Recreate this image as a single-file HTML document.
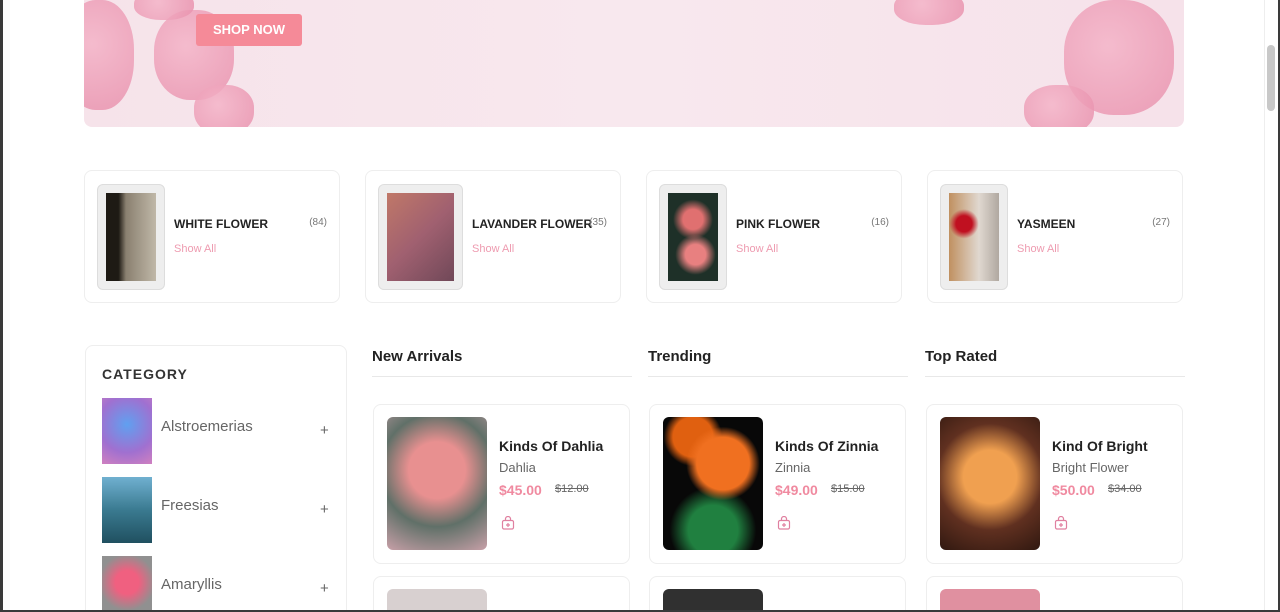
<!DOCTYPE html>
<html><head><meta charset="utf-8"><style>
*{box-sizing:border-box;margin:0;padding:0}
html{width:1280px;height:612px;overflow:hidden}
body{width:1280px;height:612px;overflow:hidden;background:#fff;font-family:"Liberation Sans",sans-serif;position:relative}
.frameL{position:absolute;left:0;top:0;width:3px;height:612px;background:#3a3a3a}
.frameR{position:absolute;right:0;top:0;width:2px;height:612px;background:#3a3a3a}
.frameB{position:absolute;left:0;top:610px;width:1280px;height:2px;background:#3a3a3a}
.sb{position:absolute;left:1267px;top:45px;width:8px;height:66px;background:#c8c8c8;border-radius:4px}
.sbline{position:absolute;left:1264px;top:0;width:1px;height:612px;background:#eee}
.banner{position:absolute;left:84px;top:-10px;width:1100px;height:137px;border-radius:0 0 8px 8px;overflow:hidden;background:linear-gradient(90deg,#f6e3ea,#f8e8ee 50%,#f6e2ea)}
.f{position:absolute;border-radius:45%;background:radial-gradient(circle at 40% 40%,#f4b4c8,#e890ac);opacity:.85}
.shop{position:absolute;left:196px;top:14px;width:106px;height:32px;background:#f58a98;border-radius:3px;color:#fff;font-weight:bold;font-size:13px;text-align:center;line-height:32px}
.cc{position:absolute;top:170px;width:256px;height:133px;border:1px solid #eee;border-radius:8px}
.cc .im{position:absolute;left:12px;top:13px;width:68px;height:106px;background:#eee;border-radius:6px;border:1px solid #ddd}
.cc .im div{position:absolute;left:8px;top:8px;right:8px;bottom:8px}
.cc .t{position:absolute;left:89px;top:46px;font-size:12px;font-weight:bold;color:#222}
.cc .n{position:absolute;right:12px;top:46px;font-size:10px;color:#777}
.cc .s{position:absolute;left:89px;top:72px;font-size:11px;color:#ee9bb0}
.cat{position:absolute;left:85px;top:345px;width:262px;height:280px;border:1px solid #eee;border-radius:8px}
.cat h3{position:absolute;left:16px;top:20px;font-size:14px;letter-spacing:1px;color:#333}
.ci{position:absolute;left:16px;width:50px;height:66px}
.cl{position:absolute;left:75px;font-size:15px;color:#666}
.pl{position:absolute;left:234px;font-size:15px;color:#666}
.hd{position:absolute;top:348px;font-size:15px;font-weight:bold;color:#222}
.hl{position:absolute;top:376px;height:1px;width:260px;background:#e8e8e8}
.pc{position:absolute;top:404px;width:257px;height:160px;border:1px solid #eee;border-radius:8px}
.pc2{position:absolute;top:576px;width:257px;height:60px;border:1px solid #eee;border-radius:8px}
.pi{position:absolute;left:13px;top:12px;width:100px;height:133px;border-radius:6px}
.pn{position:absolute;left:125px;top:33px;font-size:14px;font-weight:bold;color:#222}
.ps{position:absolute;left:125px;top:55px;font-size:13px;color:#666}
.pp{position:absolute;left:125px;top:77px;font-size:14px;font-weight:bold;color:#f08aa0}
.po{position:absolute;left:181px;top:78px;font-size:11px;color:#666;text-decoration:line-through}
.bag{position:absolute;left:127px;top:111px}
</style></head><body>
<div class="banner">
<div class="f" style="left:-20px;top:10px;width:70px;height:110px"></div>
<div class="f" style="left:70px;top:20px;width:80px;height:90px"></div>
<div class="f" style="left:110px;top:95px;width:60px;height:50px"></div>
<div class="f" style="left:50px;top:0;width:60px;height:30px"></div>
<div class="f" style="left:810px;top:0;width:70px;height:35px"></div>
<div class="f" style="left:980px;top:10px;width:110px;height:115px"></div>
<div class="f" style="left:940px;top:95px;width:70px;height:50px"></div>
</div>
<div class="shop">SHOP NOW</div>

<div class="cc" style="left:84px"><div class="im"><div style="background:linear-gradient(90deg,#1e1a14 25%,#8a8070 40%,#c0b8a8)"></div></div><div class="t">WHITE FLOWER</div><div class="n">(84)</div><div class="s">Show All</div></div>
<div class="cc" style="left:365px"><div class="im" style="width:85px;left:12px"><div style="background:linear-gradient(135deg,#c07868,#a06070 50%,#704858)"></div></div><div class="t" style="left:106px">LAVANDER FLOWER</div><div class="n" style="right:13px">(35)</div><div class="s" style="left:106px">Show All</div></div>
<div class="cc" style="left:646px"><div class="im"><div style="background:radial-gradient(circle at 50% 30%,#e07070 15%,transparent 30%),radial-gradient(circle at 55% 70%,#e88080 15%,transparent 30%),#1e3028"></div></div><div class="t">PINK FLOWER</div><div class="n">(16)</div><div class="s">Show All</div></div>
<div class="cc" style="left:927px"><div class="im"><div style="background:radial-gradient(circle at 30% 35%,#c01020 12%,transparent 22%),linear-gradient(90deg,#c09060,#e0d8d0 60%,#b0a8a0)"></div></div><div class="t">YASMEEN</div><div class="n">(27)</div><div class="s">Show All</div></div>

<div class="cat"><h3>CATEGORY</h3>
<div class="ci" style="top:52px;background:radial-gradient(circle at 50% 40%,#60a0f0,#a070d0 60%,#d080c0)"></div><div class="cl" style="top:72px">Alstroemerias</div><div class="pl" style="top:76px">+</div>
<div class="ci" style="top:131px;background:linear-gradient(180deg,#70b0d0,#3a7a90 50%,#205060)"></div><div class="cl" style="top:151px">Freesias</div><div class="pl" style="top:155px">+</div>
<div class="ci" style="top:210px;background:radial-gradient(circle at 50% 40%,#f06080 25%,#909090 60%)"></div><div class="cl" style="top:230px">Amaryllis</div><div class="pl" style="top:234px">+</div>
</div>

<div class="hd" style="left:372px">New Arrivals</div><div class="hl" style="left:372px"></div>
<div class="hd" style="left:648px">Trending</div><div class="hl" style="left:648px"></div>
<div class="hd" style="left:925px">Top Rated</div><div class="hl" style="left:925px"></div>

<div class="pc" style="left:373px"><div class="pi" style="background:radial-gradient(circle at 50% 40%,#e89090 30%,#607068 60%,#c8a0a8)"></div><div class="pn">Kinds Of Dahlia</div><div class="ps">Dahlia</div><div class="pp">$45.00</div><div class="po">$12.00</div><svg class="bag" width="14" height="14" viewBox="0 0 14 14" fill="none" stroke="#e080a0" stroke-width="1.2"><rect x="1.5" y="4.5" width="11" height="8.5" rx="1.5"/><path d="M4.5 4.5V3a2.5 2.5 0 015 0v1.5M7 7v4M5 9h4"/></svg></div>
<div class="pc" style="left:649px"><div class="pi" style="background:radial-gradient(circle at 60% 35%,#f07020 25%,transparent 35%),radial-gradient(circle at 30% 15%,#e06010 15%,transparent 22%),radial-gradient(circle at 50% 85%,#208040 20%,transparent 35%),#080808"></div><div class="pn">Kinds Of Zinnia</div><div class="ps">Zinnia</div><div class="pp">$49.00</div><div class="po">$15.00</div><svg class="bag" width="14" height="14" viewBox="0 0 14 14" fill="none" stroke="#e080a0" stroke-width="1.2"><rect x="1.5" y="4.5" width="11" height="8.5" rx="1.5"/><path d="M4.5 4.5V3a2.5 2.5 0 015 0v1.5M7 7v4M5 9h4"/></svg></div>
<div class="pc" style="left:926px"><div class="pi" style="background:radial-gradient(circle at 50% 45%,#f0a050 30%,#603020 60%,#301810)"></div><div class="pn">Kind Of Bright</div><div class="ps">Bright Flower</div><div class="pp">$50.00</div><div class="po">$34.00</div><svg class="bag" width="14" height="14" viewBox="0 0 14 14" fill="none" stroke="#e080a0" stroke-width="1.2"><rect x="1.5" y="4.5" width="11" height="8.5" rx="1.5"/><path d="M4.5 4.5V3a2.5 2.5 0 015 0v1.5M7 7v4M5 9h4"/></svg></div>

<div class="pc2" style="left:373px"><div class="pi" style="top:12px;height:40px;background:#d8d0d0"></div></div>
<div class="pc2" style="left:649px"><div class="pi" style="top:12px;height:40px;background:#303030"></div></div>
<div class="pc2" style="left:926px"><div class="pi" style="top:12px;height:40px;background:#e090a0"></div></div>

<div class="sbline"></div><div class="sb"></div>
<div class="frameL"></div><div class="frameR"></div><div class="frameB"></div>
</body></html>
